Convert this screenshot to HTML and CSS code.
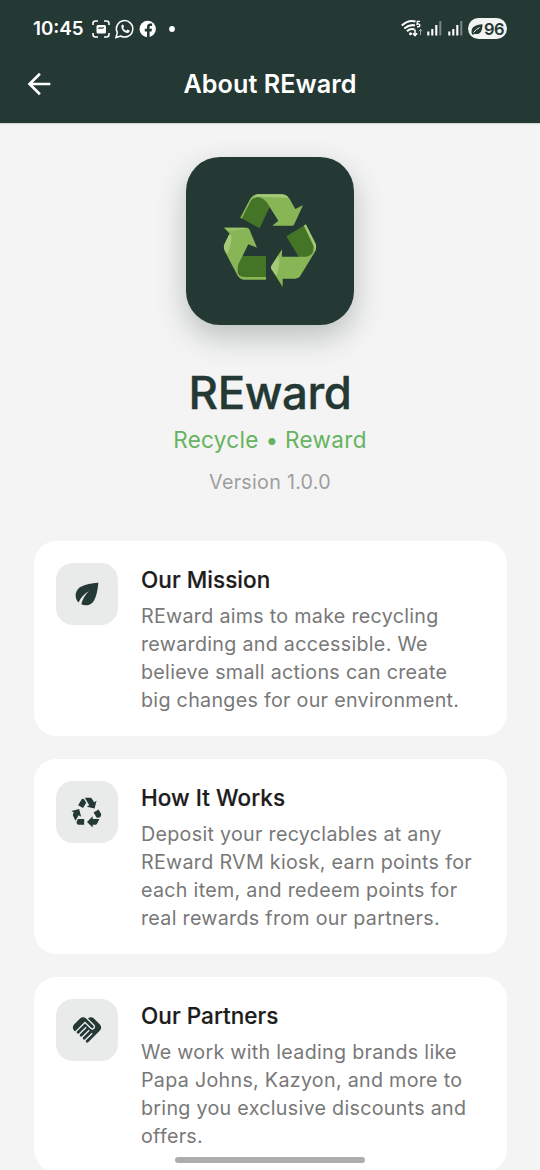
FILE: index.html
```html
<!DOCTYPE html>
<html lang="en">
<head>
<meta charset="utf-8">
<title>About REward</title>
<link rel="stylesheet" href="styles.css">
</head>
<body>
<div class="screen">
  <header class="header">
    <div class="status">
      <span class="clock">10:45</span>
      <svg class="status-left" viewBox="0 0 90 24" width="90" height="24" fill="none" stroke="#fff">
        <path d="M2 8V6.500q0-2.500 2.500-2.500H7M13 4h2.500q2.500 0 2.500 2.500V8M18 16v1.500q0 2.500-2.500 2.500H13M7 20H4.500Q2 20 2 17.500V16" stroke-width="1.600"/>
        <rect x="5.500" y="8" width="9.500" height="8.500" rx="1.500" fill="#fff" stroke="none"/>
        <path d="M7.300 11.300l2-.5 1.500.5 2-.8" stroke="#243834" stroke-width="1.200"/>
        <path d="M25 20.500l1.300-4.900a8.200 8.200 0 1 1 3.300 3.400z" stroke-width="1.500"/>
        <path d="M30.600 8.200c.8-1 1.600-.8 1.900 0l.6 1.500-.9 1.300c.7 1.400 1.700 2.200 3 2.800l1.200-1.200 2.200 1c.2 1.400-.9 2.400-2.200 2.400-3.300-.3-7-4.100-5.800-7.800z" fill="#fff" stroke="none"/>
        <circle cx="56.700" cy="12" r="8.200" fill="#fff" stroke="none"/>
        <path d="M56 20.500v-6h-2.200v-2.700H56V10c0-2.400 1.400-3.500 3.400-3.500l1.700.1V9h-1.200c-1 0-1.300.5-1.300 1.300v1.500H61l-.4 2.700h-2v6z" fill="#243834" stroke="none"/>
        <circle cx="81" cy="12" r="2.900" fill="#fff" stroke="none"/>
      </svg>
      <svg class="status-right" viewBox="0 0 62 24" width="62" height="24" fill="none" stroke="#fff">
        <path d="M.8 8.500Q7.500 2.200 14.500 4.500M3.300 11.500Q8.500 7 14 8.500M6 14.200Q9.500 11 13.500 12.500" stroke-width="2"/>
        <circle cx="9.500" cy="16.700" r="1.500" fill="#fff" stroke="none"/>
        <path d="M19 4.400h-2.600l-.3 2.800q2.700-.7 2.700 1.200 0 1.700-2.800 1.300" stroke-width="1.400"/>
        <path d="M14 12.500v6M11.800 16.300l2.200 2.300 2.200-2.300" stroke-width="1.500"/>
        <path d="M19.500 18v-5.500M17.800 14.300l1.700-1.900 1.700 1.900" stroke-width="1" opacity=".55"/>
        <path d="M27.300 18.500v-4M31.300 18.500v-6.500M35.300 18.500V8M48.300 18.500v-4M52.300 18.500v-6.500M56.300 18.500V8" stroke-width="2.100"/>
        <path d="M39.300 18.500V4M60.300 18.500V4" stroke-width="2" opacity=".4"/>
      </svg>
      <span class="battery">
        <svg viewBox="0 0 12 12" width="12" height="12"><path d="M.8 10.500C-.3 5 2.500 2 11.500 1.200 11.500 9 8.500 12 3.500 10.700L1.800 12z" fill="#243834"/><path d="M2.500 9.500Q5 6.200 8.500 4.600" stroke="#f1f4f3" fill="none"/></svg>
        <span>96</span>
      </span>
    </div>
    <div class="appbar">
      <svg class="back" viewBox="0 0 24 24" width="34" height="34"><path d="M20 11.100H7.600l5.700-5.700L12 4.100l-8 7.900 8 7.900 1.300-1.300-5.700-5.700H20z" fill="#fff"/></svg>
      <h1 class="title">About REward</h1>
    </div>
  </header>

  <main class="content">
    <section class="brand">
      <div class="logo">
        <svg viewBox="0 3 330 330" width="110" height="110">
          <path d="M76 98L103 47Q115 28 130 30Q152 34 164 66L134 130z" fill="#447425"/>
          <path d="M76 98L105 43Q113 28 126 28H200Q216 29 224 42L241 72L264 61L237 119Q236 122 230 122H172L190 107L164 66Q148 35 126 36Q113 37 106 50L80 101z" fill="#88b656"/>
          <path d="M126 28H200Q214 29 220 38L150 36Q116 32 105 49z" fill="#a4c97a"/>
          <path d="M214 154L270 120L298 178Q304 196 290 208L279 216H251z" fill="#447425"/>
          <path d="M266 122L272 118L301 174Q307 188 299 202L257 271Q252 281 240 281H203V306L169 252Q166 246 170 240L201 193V215H273Q301 210 294 180z" fill="#88b656"/>
          <path d="M268 121L273 119L301 175Q306 189 298 203Q301 191 296 179z" fill="#a4c97a"/>
          <path d="M171 241L190 211Q199 233 184 272L169 252Q166 246 171 241z" fill="#a4c97a"/>
          <path d="M82 213H153V280H84Q62 263 69 233z" fill="#447425"/>
          <path d="M27 128H97Q101 128 103 133L126 188L100 178L70 238Q62 276 88 276H153V284H88Q76 284 68 272L30 200Q23 187 30 174L44 146z" fill="#88b656"/>
          <path d="M43 147L49 152Q51 176 37 206L29 195Q24 184 30 174z" fill="#a4c97a"/>
          <path d="M28 128H90L94 132L45 139z" fill="#98c169"/>
        </svg>
      </div>
      <h2 class="name">REward</h2>
      <p class="tagline">Recycle • Reward</p>
      <p class="version">Version 1.0.0</p>
    </section>

    <article class="card">
      <div class="tile"><svg viewBox="0 0 24 24" width="34" height="34"><path d="M6.050 8.050c-2.730 2.730-2.730 7.150-.02 9.880 1.470-3.400 4.090-6.240 7.360-7.930-2.770 2.340-4.710 5.610-5.390 9.320 2.600 1.230 5.800.78 7.950-1.370C19.430 14.470 20 4 20 4S9.530 4.570 6.050 8.050z"/></svg></div>
      <div class="body">
        <h3 class="heading">Our Mission</h3>
        <p class="text">REward aims to make recycling<br>rewarding and accessible. We<br>believe small actions can create<br>big changes for our environment.</p>
      </div>
    </article>

    <article class="card">
      <div class="tile"><svg viewBox="0 0 24 24" width="34" height="34"><path d="M5.770 7.150L7.200 4.780l1.030-1.710c.39-.65 1.330-.65 1.720 0l1.480 2.460-1.230 2.060-1 1.620-3.430-2.060zm15.950 5.820l-1.600-2.660-3.460 2L18.870 16H20c.76 0 1.450-.43 1.790-1.110.14-.28.21-.58.21-.89 0-.36-.1-.71-.28-1.030zM16 21h1.500c.76 0 1.450-.43 1.790-1.110L20.740 17H16v-2l-4 4 4 4v-2zm-6-4H5.700l-.84 1.410c-.3.5-.32 1.120-.06 1.650.28.57.87.94 1.520.94H10v-4zm-3.880-2.650l1.730 1.040L6.480 9.900 1 11.270l1.700 1.020-.41.69c-.35.59-.38 1.310-.07 1.920l1.630 3.260 2.270-3.810zm10.900-9.210l-1.300-2.170C15.350 2.370 14.700 2 14 2h-3.530l3.120 5.200-1.720 1.030 5.490 1.370 1.370-5.490-1.710 1.030z"/></svg></div>
      <div class="body">
        <h3 class="heading">How It Works</h3>
        <p class="text">Deposit your recyclables at any<br>REward RVM kiosk, earn points for<br>each item, and redeem points for<br>real rewards from our partners.</p>
      </div>
    </article>

    <article class="card">
      <div class="tile"><svg viewBox="0 0 24 24" width="34" height="34"><path d="M16.480 10.410c-.39.39-1.040.39-1.430 0l-4.470-4.460-7.050 7.040-.66-.63c-1.170-1.170-1.170-3.070 0-4.240l4.240-4.240c1.170-1.170 3.070-1.170 4.240 0L16.480 9c.39.39.39 1.020 0 1.410zm.7-2.120c.78.78.78 2.050 0 2.830-1.270 1.270-2.610.22-2.830 0l-3.760-3.760-5.570 5.570c-.39.39-.39 1.020 0 1.410.39.39 1.020.39 1.420 0l4.620-4.620.71.71-4.620 4.620c-.39.39-.39 1.020 0 1.410.39.39 1.020.39 1.420 0l4.620-4.620.71.71-4.620 4.620c-.39.39-.39 1.020 0 1.410.39.39 1.020.39 1.410 0l4.620-4.620.71.71-4.620 4.620c-.39.39-.39 1.020 0 1.410.39.39 1.020.39 1.410 0l8.320-8.340c1.170-1.170 1.170-3.070 0-4.240l-4.240-4.240c-1.150-1.150-3.010-1.170-4.180-.06l4.470 4.470z"/></svg></div>
      <div class="body">
        <h3 class="heading">Our Partners</h3>
        <p class="text">We work with leading brands like<br>Papa Johns, Kazyon, and more to<br>bring you exclusive discounts and<br>offers.</p>
      </div>
    </article>
  </main>
  <div class="home-bar"></div>
</div>
</body>
</html>
```
FILE: styles.css
```css
* { box-sizing: border-box; }
html, body, h1, h2, h3, p { margin: 0; }
body {
  background: #f4f4f4;
  font-family: Inter, "Liberation Sans", sans-serif;
}
svg { display: block; flex: none; }
.screen {
  position: relative;
  width: 540px;
  height: 1170px;
  overflow: hidden;
}
.header {
  height: 123px;
  background: #243834;
  color: #fff;
  box-shadow: 0 1px 1px rgba(36, 56, 52, .15);
}
.status {
  height: 45px;
  padding: 12px 33px 0;
  display: flex;
  align-items: flex-start;
}
.clock {
  width: 58px;
  font-size: 18.800px;
  line-height: 34px;
  font-weight: 600;
  white-space: nowrap;
}
.status-left { margin-top: 5px; }
.status-right { margin: 5px 5px 0 auto; }
.battery {
  display: flex;
  align-items: center;
  justify-content: center;
  gap: 1px;
  width: 39px;
  height: 21px;
  margin-top: 6px;
  border-radius: 11px;
  background: #f1f4f3;
  color: #243834;
  font-size: 16.500px;
  font-weight: 600;
  letter-spacing: -.5px;
}
.appbar {
  display: grid;
  grid-template-columns: 56px 1fr 56px;
  align-items: center;
  height: 78px;
}
.back { margin-left: 22px; }
.title {
  text-align: center;
  font-size: 25.200px;
  font-weight: 600;
  line-height: 34px;
  letter-spacing: .05px;
}
.content { padding: 33.500px 33.500px 0; }
.brand {
  display: flex;
  flex-direction: column;
  align-items: center;
  height: 384px;
}
.logo {
  display: grid;
  place-items: center;
  width: 168.500px;
  height: 168.500px;
  flex: none;
  border-radius: 34px;
  background: #243834;
  box-shadow: 0 12px 30px rgba(36, 56, 52, .28);
}
.name {
  margin-top: 39px;
  font-size: 45.500px;
  line-height: 58px;
  font-weight: 500;
  letter-spacing: -.4px;
  color: #243834;
  -webkit-text-stroke: .4px #243834;
}
.tagline {
  margin-top: 2.500px;
  font-size: 22.500px;
  line-height: 30px;
  font-weight: 400;
  letter-spacing: .33px;
  color: #65b35e;
}
.version {
  margin-top: 13px;
  font-size: 19.700px;
  line-height: 28px;
  font-weight: 400;
  letter-spacing: .28px;
  color: #9e9e9e;
}
.card {
  display: flex;
  align-items: flex-start;
  gap: 23px;
  height: 195.500px;
  margin-bottom: 22.500px;
  padding: 22.500px;
  border-radius: 22.500px;
  background: #fff;
}
.tile {
  display: grid;
  place-items: center;
  flex: none;
  width: 62px;
  height: 62px;
  border-radius: 17px;
  background: #e9ebeb;
  fill: #243834;
}
.body { padding-top: 1px; }
.heading {
  font-size: 22.500px;
  line-height: 32px;
  font-weight: 500;
  letter-spacing: .05px;
  color: #1c1c1c;
  -webkit-text-stroke: .2px #1c1c1c;
}
.text {
  margin-top: 6px;
  font-size: 19.700px;
  line-height: 28.150px;
  font-weight: 400;
  letter-spacing: .29px;
  color: #787878;
  white-space: nowrap;
}
.home-bar {
  position: absolute;
  left: 175px;
  top: 1157px;
  width: 190px;
  height: 6px;
  border-radius: 3px;
  background: #adadad;
}
```
